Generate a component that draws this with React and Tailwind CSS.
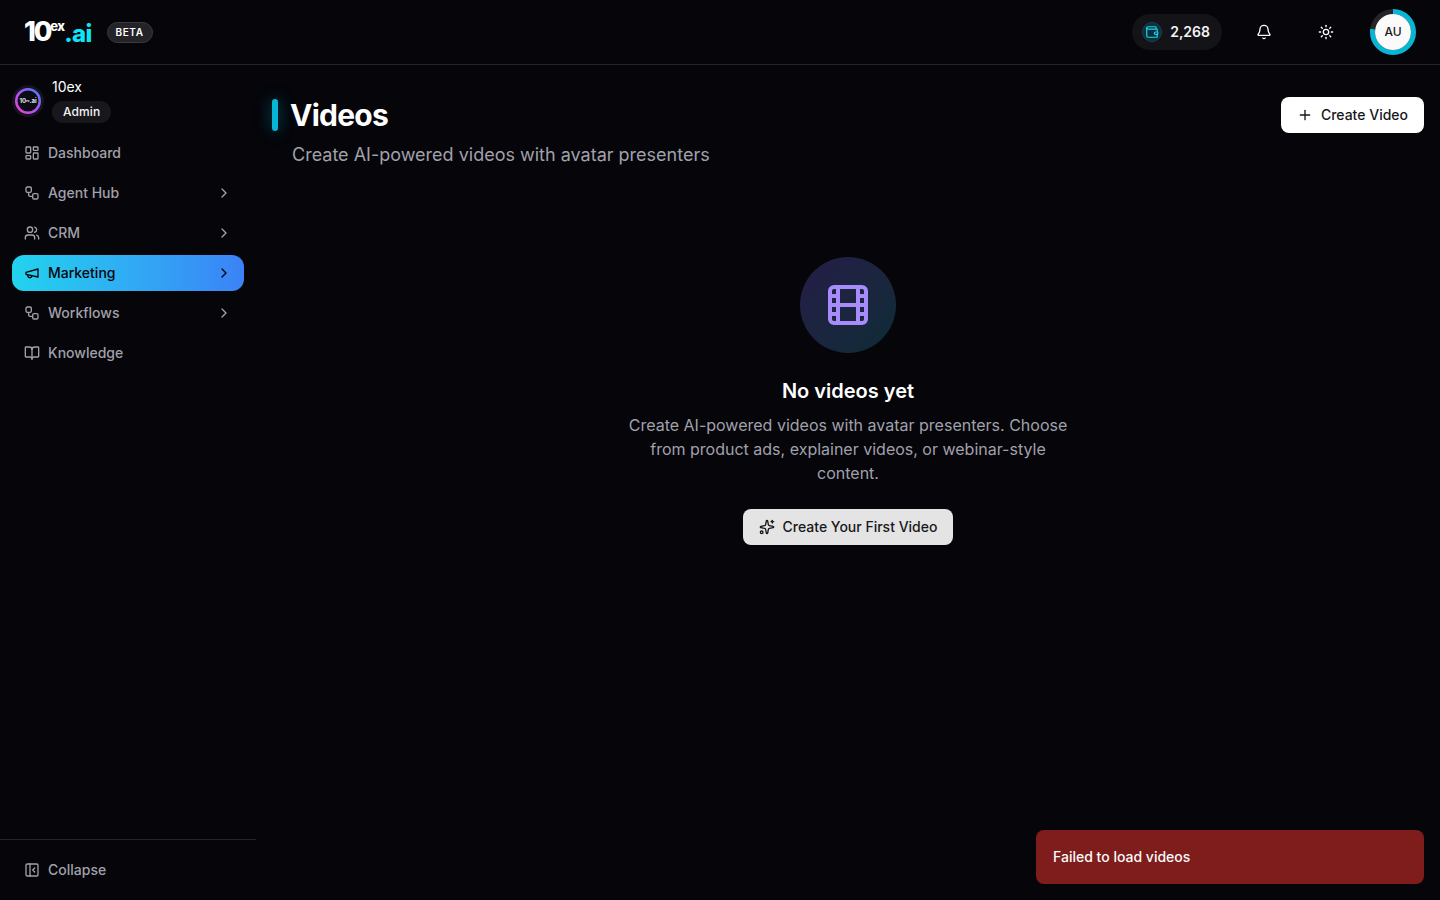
import { BookOpen, ChevronRight, Bell, Film, LayoutDashboard, PanelLeftClose, Plus, Sparkles, Sun, Users, Wallet, Workflow } from "lucide-react";

function MegaphoneIcon({ size, className }) {
    return (
        <svg width={size} height={size} viewBox="0 0 24 24" fill="none" stroke="currentColor" strokeWidth="2" strokeLinecap="round" strokeLinejoin="round" className={className}>
            <path d="m3 11 18-5v12L3 14v-3z" />
            <path d="M11.6 16.8a3 3 0 1 1-5.8-1.6" />
        </svg>
    );
}

const navItems = [
    { label: "Dashboard", icon: LayoutDashboard },
    { label: "Agent Hub", icon: Workflow, arrow: true },
    { label: "CRM", icon: Users, arrow: true },
    { label: "Marketing", icon: MegaphoneIcon, arrow: true, active: true },
    { label: "Workflows", icon: Workflow, arrow: true },
    { label: "Knowledge", icon: BookOpen },
];

function Logo() {
    return (
        <div className="flex items-start font-['Inter',sans-serif] font-extrabold leading-none select-none">
            <span className="text-[27px] tracking-[-0.08em] text-white">10</span>
            <span className="mt-[2px] text-[13px] tracking-[-0.05em] text-white">ex</span>
            <span className="mt-[4px] text-[24px] tracking-[-0.03em] text-[#0ee4f8]">.ai</span>
        </div>
    );
}

function NavItem({ item }) {
    const Icon = item.icon;
    return (
        <div
            className={
                item.active
                    ? "flex h-9 items-center gap-2 rounded-xl bg-gradient-to-r from-[#22d3ee] to-[#3b82f6] px-3 text-[#05050a]"
                    : "flex h-9 items-center gap-2 rounded-xl px-3 text-[#a1a1aa]"
            }
        >
            <Icon size={16} strokeWidth={2} className="shrink-0" />
            <span className="flex-1 text-sm font-medium">{item.label}</span>
            {item.arrow && <ChevronRight size={16} strokeWidth={2} />}
        </div>
    );
}

export default function App() {
    return (
        <div className="relative flex h-[900px] flex-col overflow-hidden bg-[#05050a] font-['Inter',sans-serif] text-white">
            {/* Header */}
            <header className="flex h-[65px] shrink-0 items-center justify-between border-b border-[#232328] pl-6 pr-6">
                <div className="flex items-center gap-[15px]">
                    <Logo />
                    <span className="rounded-full border border-[#3a3a40] bg-[#232328] px-2 py-[2px] text-[10px] font-semibold leading-[15px] tracking-[0.06em] text-white">
                        BETA
                    </span>
                </div>
                <div className="flex items-center">
                    <div className="flex h-9 items-center gap-2 rounded-full bg-[#131318] pl-[10px] pr-3">
                        <div className="flex h-5 w-5 items-center justify-center rounded-full border border-[#0e4a58] bg-[#0c2f3a] text-[#22d3ee]">
                            <Wallet size={14} strokeWidth={2} />
                        </div>
                        <span className="text-sm font-semibold text-[#f4f4f5]">2,268</span>
                    </div>
                    <Bell size={16} strokeWidth={2} className="ml-[34px] text-white" />
                    <Sun size={16} strokeWidth={2} className="ml-[46px] text-white" />
                    <div className="relative ml-[36px] flex h-[46px] w-[46px] items-center justify-center">
                        <svg viewBox="0 0 46 46" className="absolute inset-0 h-[46px] w-[46px] -rotate-90">
                            <circle cx="23" cy="23" r="20.5" fill="none" stroke="#232328" strokeWidth="5" />
                            <circle cx="23" cy="23" r="20.5" fill="none" stroke="#06b6d4" strokeWidth="5" strokeDasharray="99 129" />
                        </svg>
                        <div className="relative flex h-9 w-9 items-center justify-center rounded-full bg-[#fafafa] text-xs font-medium text-[#18181b]">
                            AU
                        </div>
                    </div>
                </div>
            </header>

            <div className="flex min-h-0 flex-1">
                {/* Sidebar */}
                <aside className="flex w-64 shrink-0 flex-col">
                    <div className="flex items-center gap-[8px] pl-3 pt-[12px]">
                        <div className="relative mt-[2px] flex h-8 w-8 items-center justify-center rounded-full bg-[#17131f]">
                            <svg viewBox="0 0 26 26" className="absolute left-[3px] top-[3px] h-[26px] w-[26px]">
                                <defs>
                                    <linearGradient id="orgRing" x1="1" y1="0" x2="0" y2="1">
                                        <stop offset="0%" stopColor="#3b82f6" />
                                        <stop offset="50%" stopColor="#a855f7" />
                                        <stop offset="100%" stopColor="#f03fd0" />
                                    </linearGradient>
                                </defs>
                                <circle cx="13" cy="13" r="11.75" fill="#0c0a14" stroke="url(#orgRing)" strokeWidth="2.5" />
                            </svg>
                            <span className="relative text-[6px] font-bold leading-none text-[#e4e4e7]">
                                10<sup className="text-[3px]">ex</sup>.ai
                            </span>
                        </div>
                        <div>
                            <div className="text-sm leading-5 text-white">10ex</div>
                            <div className="mt-[4px] w-fit rounded-full bg-[#18181c] px-[11px] py-[2px] text-xs font-medium leading-[18px] tracking-[0.01em] text-[#f4f4f5]">
                                Admin
                            </div>
                        </div>
                    </div>

                    <nav className="mt-[12px] flex flex-col gap-1 px-3">
                        {navItems.map((item) => (
                            <NavItem key={item.label} item={item} />
                        ))}
                    </nav>

                    <div className="mt-auto border-t border-[#232328] px-3 pb-3 pt-3">
                        <div className="flex h-9 items-center gap-2 px-3 text-[#a1a1aa]">
                            <PanelLeftClose size={16} strokeWidth={2} />
                            <span className="text-sm font-medium">Collapse</span>
                        </div>
                    </div>
                </aside>

                {/* Main */}
                <main className="flex min-w-0 flex-1 flex-col px-4 pt-8">
                    <div className="flex items-start justify-between">
                        <div>
                            <div className="flex items-center gap-3">
                                <div className="h-8 w-1.5 rounded-full bg-[#06b6d4] shadow-[0_0_15px_rgba(6,182,212,0.5)]"></div>
                                <h1 className="text-3xl font-bold leading-9 tracking-tight text-white">Videos</h1>
                            </div>
                            <p className="mt-[8px] pl-5 text-lg leading-7 text-[#a1a1aa]">
                                Create AI-powered videos with avatar presenters
                            </p>
                        </div>
                        <button className="flex h-9 items-center gap-2 rounded-lg bg-white px-4 text-sm font-medium text-[#18181b]">
                            <Plus size={16} strokeWidth={2} />
                            Create Video
                        </button>
                    </div>

                    {/* Empty state */}
                    <div className="mt-[88px] flex flex-col items-center text-center">
                        <div className="flex h-24 w-24 items-center justify-center rounded-full bg-gradient-to-br from-[#251c47] to-[#0b2c36]">
                            <Film size={48} strokeWidth={2} className="text-[#a78bfa]" />
                        </div>
                        <h3 className="mt-6 text-xl font-semibold leading-7 text-white">No videos yet</h3>
                        <p className="mt-2 w-[448px] text-base leading-6 text-[#a1a1aa]">
                            Create AI-powered videos with avatar presenters. Choose from product ads, explainer videos, or webinar-style content.
                        </p>
                        <button className="mt-6 flex h-9 items-center gap-2 rounded-lg bg-[#e4e4e4] px-4 text-sm font-medium text-[#18181b]">
                            <Sparkles size={16} strokeWidth={2} />
                            Create Your First Video
                        </button>
                    </div>
                </main>
            </div>

            {/* Toast */}
            <div className="absolute bottom-4 right-4 flex h-[54px] w-[388px] items-center rounded-lg bg-[#7f1d1d] px-[17px] text-sm font-medium text-[#fafafa]">
                Failed to load videos
            </div>
        </div>
    );
}
